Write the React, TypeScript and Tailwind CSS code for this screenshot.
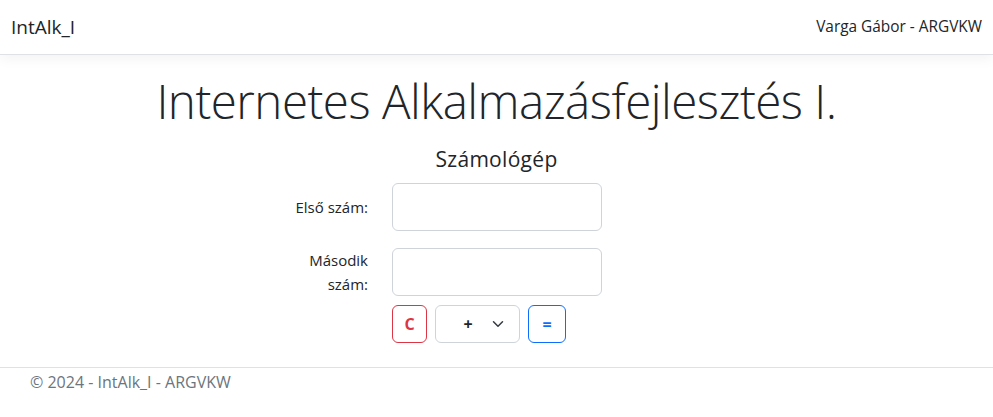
const font = { fontFamily: '"Open Sans", "Noto Sans", sans-serif' };

export default function App() {
  return (
    <div className="min-h-[417px] flex flex-col bg-white text-[#212529]" style={font}>
      <nav className="h-[55px] flex items-center justify-between px-[11px] border-b border-[#dee2e6] shadow-[0_0.25rem_0.75rem_rgba(0,0,0,0.05)]">
        <a className="text-[19px] leading-[30px] text-[#212529]">IntAlk_I</a>
        <span className="text-[15.4px] leading-[24px] text-[#212529]">Varga Gábor - ARGVKW</span>
      </nav>

      <main className="flex-1 flex flex-col items-center pt-[16px]">
        <h1 className="text-[47.5px] font-light leading-[60px] tracking-[-0.5px]">
          Internetes Alkalmazásfejlesztés I.
        </h1>
        <h5 className="text-[21px] leading-[24px] mt-[16px] tracking-[0.3px]">Számológép</h5>

        <div className="w-full mt-[12px] pl-[288px]">
          <div className="flex items-center">
            <label className="w-[80px] text-right text-[15px] leading-[24px]">Első szám:</label>
            <input className="ml-[24px] w-[210px] h-[48px] border border-[#ced4da] rounded-[6px] px-4 outline-none" />
          </div>
          <div className="flex items-center mt-[17px]">
            <label className="w-[80px] text-right text-[15px] leading-[24px]">Második szám:</label>
            <input className="ml-[24px] w-[210px] h-[48px] border border-[#ced4da] rounded-[6px] px-4 outline-none" />
          </div>
          <div className="flex items-center gap-[8px] ml-[104px] mt-[9px]">
            <button className="w-[35px] h-[38px] border border-[#dc3545] rounded-[6px] text-[#dc3545] font-bold text-[16px]">
              C
            </button>
            <div className="relative w-[85px] h-[38px] border border-[#ced4da] rounded-[6px] flex items-center">
              <span className="w-[48px] ml-[8px] text-center font-bold text-[16px]">+</span>
              <svg className="absolute right-[13px] top-[12px]" width="16" height="12" viewBox="0 0 16 16">
                <path d="m2 5 6 6 6-6" fill="none" stroke="#343a40" strokeWidth="2" strokeLinecap="round" strokeLinejoin="round" />
              </svg>
            </div>
            <button className="w-[38px] h-[38px] border border-[#0d6efd] rounded-[6px] text-[#0d6efd] font-bold text-[16px]">
              =
            </button>
          </div>
        </div>
      </main>

      <footer className="border-t border-[#dee2e6] h-[50px] pl-[30px] pt-[2px] text-[16px] leading-[24px] text-[#6c757d]">
        © 2024 - IntAlk_I - ARGVKW
      </footer>
    </div>
  );
}
